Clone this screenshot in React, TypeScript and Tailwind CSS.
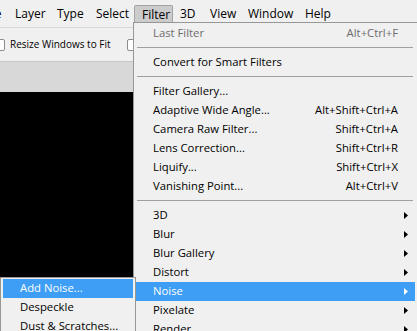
import React from 'react';

const font = { fontFamily: '"Open Sans", "Noto Sans", sans-serif' };

type Item =
  | { kind: 'sep' }
  | { kind: 'item'; label: string; shortcut?: string; sub?: boolean; disabled?: boolean; active?: boolean };

const menuItems: Item[] = [
  { kind: 'item', label: 'Last Filter', shortcut: 'Alt+Ctrl+F', disabled: true },
  { kind: 'sep' },
  { kind: 'item', label: 'Convert for Smart Filters' },
  { kind: 'sep' },
  { kind: 'item', label: 'Filter Gallery...' },
  { kind: 'item', label: 'Adaptive Wide Angle...', shortcut: 'Alt+Shift+Ctrl+A' },
  { kind: 'item', label: 'Camera Raw Filter...', shortcut: 'Shift+Ctrl+A' },
  { kind: 'item', label: 'Lens Correction...', shortcut: 'Shift+Ctrl+R' },
  { kind: 'item', label: 'Liquify...', shortcut: 'Shift+Ctrl+X' },
  { kind: 'item', label: 'Vanishing Point...', shortcut: 'Alt+Ctrl+V' },
  { kind: 'sep' },
  { kind: 'item', label: '3D', sub: true },
  { kind: 'item', label: 'Blur', sub: true },
  { kind: 'item', label: 'Blur Gallery', sub: true },
  { kind: 'item', label: 'Distort', sub: true },
  { kind: 'item', label: 'Noise', sub: true, active: true },
  { kind: 'item', label: 'Pixelate', sub: true },
  { kind: 'item', label: 'Render', sub: true },
];

const bar = [
  { label: 'Image', w: 'w-[48px]', ml: '-ml-[40px]' },
  { label: 'Layer', w: 'w-[42px]' },
  { label: 'Type', w: 'w-[39px]' },
  { label: 'Select', w: 'w-[45px]' },
  { label: 'Filter', w: 'w-[39px]', open: true },
  { label: '3D', w: 'w-[30px]' },
  { label: 'View', w: 'w-[38px]' },
  { label: 'Window', w: 'w-[57px]' },
  { label: 'Help', w: 'w-[50px]' },
];

const Arrow = ({ white }: { white?: boolean }) => (
  <svg width="4" height="7" viewBox="0 0 4 7" className="block">
    <path d="M0 0 L4 3.5 L0 7 Z" fill={white ? '#ffffff' : '#000000'} />
  </svg>
);

export default function App() {
  return (
    <div className="relative w-[417px] h-[331px] overflow-hidden bg-[#f0f0f0] text-[12px] text-black" style={font}>
      {/* menu bar */}
      <div className="flex h-[28px] items-stretch bg-[#f0f0f0] border-b border-[#d9d9d9]">
        {bar.map((b) => (
          <div
            key={b.label}
            className={`${b.w} ${b.ml ?? ''} shrink-0 pl-[7px] flex items-center ${
              b.open ? 'mt-[5px] bg-[#cccccc] border border-b-0 border-[#a3a3a3] rounded-t-[2px] pl-[6px] pb-[3px]' : ''
            }`}
          >
            {b.label}
          </div>
        ))}
      </div>

      {/* options bar */}
      <div className="flex h-[33px] items-center bg-[#f0f0f0]">
        <div className="w-[12px] h-[12px] -ml-[7px] rounded-[2px] border border-[#8c8c8c] bg-white" />
        <span className="ml-[5px] text-[10px]">Resize Windows to Fit</span>
        <div className="w-[11px] h-[12px] ml-[16px] rounded-[2px] border border-[#8c8c8c] bg-white" />
      </div>

      {/* tab strip */}
      <div className="h-[31px] bg-[#d8d8d8] border-t border-[#c8c8c8]" />

      {/* canvas */}
      <div className="h-[240px] bg-black" />

      {/* Filter dropdown */}
      <div className="absolute left-[133px] top-[22px] w-[285px] bg-[#f0f0f0] border border-[#979797] p-[2px] pt-[1px] text-[11.3px]">
        {menuItems.map((it, i) =>
          it.kind === 'sep' ? (
            <div key={i} className="h-[10px] pt-[4px] pl-[1px] pr-[2px]">
              <div className="h-px bg-[#a0a0a0]" />
            </div>
          ) : (
            <div
              key={i}
              className={`flex h-[19px] items-center pl-[17px] ${
                it.active ? 'bg-[#3e9df4] text-white' : it.disabled ? 'text-[#6d6d6d]' : ''
              }`}
            >
              <span className="flex-1">{it.label}</span>
              {it.shortcut && <span>{it.shortcut}</span>}
              <span className="w-[17px] h-full flex items-center pl-[6px]">
                {it.sub && <Arrow white={it.active} />}
              </span>
            </div>
          )
        )}
      </div>

      {/* Noise submenu */}
      <div className="absolute left-0 top-[277px] w-[136px] bg-[#f0f0f0] border border-[#979797] px-[2px] pt-[1px] text-[11.3px]">
        <div className="flex h-[19px] items-center pl-[17px] bg-[#3e9df4] text-white">Add Noise...</div>
        <div className="flex h-[19px] items-center pl-[17px]">Despeckle</div>
        <div className="flex h-[19px] items-center pl-[17px]">Dust &amp; Scratches...</div>
      </div>
    </div>
  );
}
